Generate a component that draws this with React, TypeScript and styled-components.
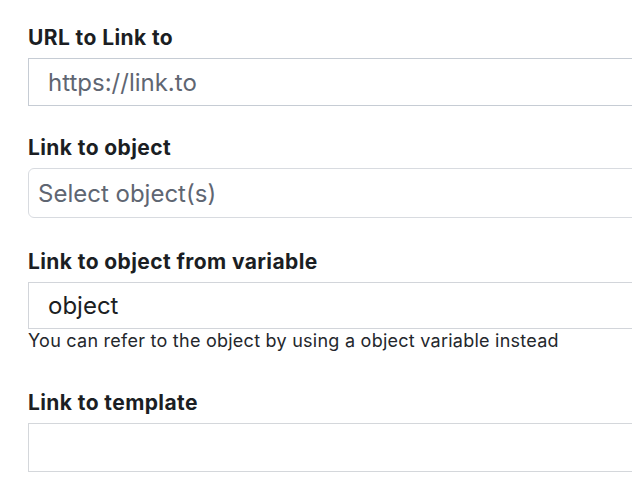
import React from "react";
import styled, { createGlobalStyle } from "styled-components";

const GlobalStyle = createGlobalStyle`
  body {
    margin: 0;
    background: #ffffff;
    overflow: hidden;
    font-family: Inter, "Liberation Sans", sans-serif;
  }
`;

const Form = styled.div`
  display: flex;
  flex-direction: column;
  width: 720px;
  padding: 26px 0 0 28px;
`;

const Field = styled.div<{ $gap: number }>`
  display: flex;
  flex-direction: column;
  margin-bottom: ${p => p.$gap}px;
`;

const Label = styled.label`
  font-size: 21px;
  line-height: 24px;
  font-weight: 700;
  letter-spacing: 0.4px;
  color: #1b1e23;
  margin-bottom: 8px;
`;

const TextInput = styled.input<{ $height: number; $border: string }>`
  box-sizing: border-box;
  height: ${p => p.$height}px;
  width: 100%;
  margin: 0;
  padding: 0 19px;
  border: 1px solid ${p => p.$border};
  border-radius: 0;
  outline: none;
  background: #ffffff;
  font-family: Inter, "Liberation Sans", sans-serif;
  font-size: 24px;
  color: #1b1e23;
  &::placeholder {
    color: #5f6672;
  }
`;

const SelectBox = styled.div`
  box-sizing: border-box;
  display: flex;
  align-items: center;
  height: 50px;
  padding: 0 9px;
  border: 1px solid #d8dbe0;
  border-radius: 6px;
  background: #ffffff;
  font-size: 24px;
  color: #5f6672;
`;

const Help = styled.div`
  font-size: 18px;
  line-height: 24px;
  letter-spacing: 0.25px;
  color: #24272c;
`;

export default function App() {
  return (
    <>
      <GlobalStyle />
      <Form>
        <Field $gap={30}>
          <Label>URL to Link to</Label>
          <TextInput $height={48} $border="#c6ccd4" placeholder="https://link.to" />
        </Field>
        <Field $gap={32}>
          <Label>Link to object</Label>
          <SelectBox>Select object(s)</SelectBox>
        </Field>
        <Field $gap={38}>
          <Label>Link to object from variable</Label>
          <TextInput $height={47} $border="#d2d5da" defaultValue="object" />
          <Help>You can refer to the object by using a object variable instead</Help>
        </Field>
        <Field $gap={0}>
          <Label>Link to template</Label>
          <TextInput $height={49} $border="#d4d7db" />
        </Field>
      </Form>
    </>
  );
}
